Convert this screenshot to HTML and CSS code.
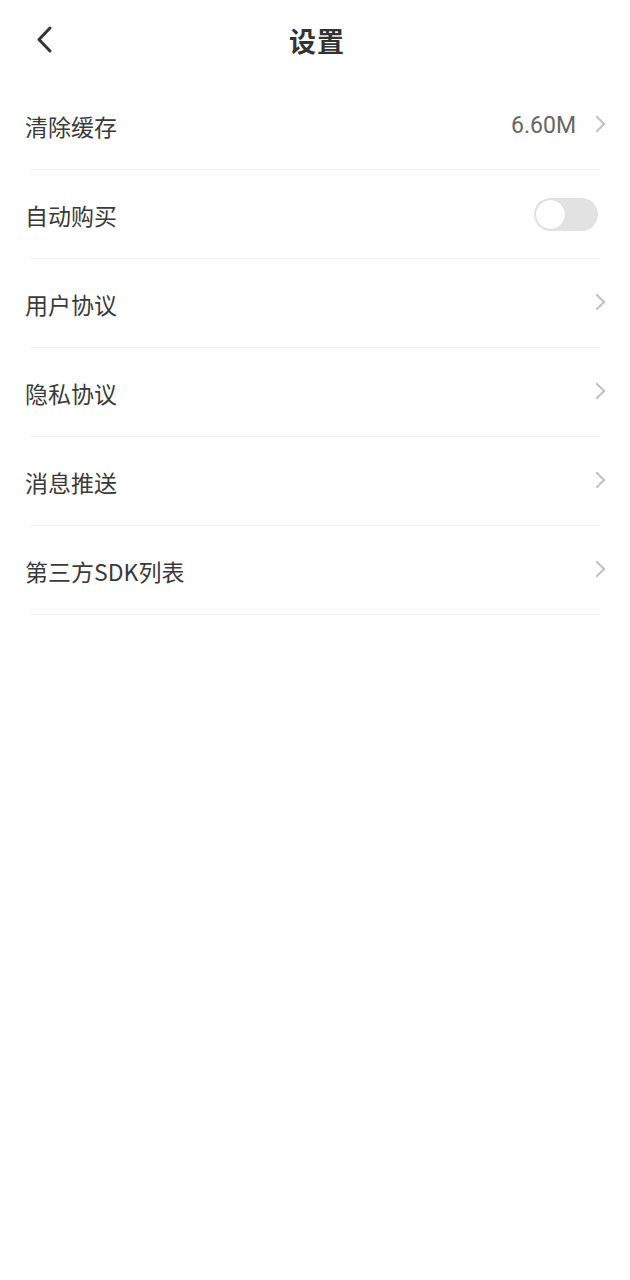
FILE: index.html
```html
<!DOCTYPE html>
<html lang="zh-CN">
<head>
    <meta charset="UTF-8">
    <meta name="viewport" content="width=device-width, initial-scale=1.0">
    <title>设置</title>
    <link rel="stylesheet" href="styles.css">
</head>
<body>
    <div class="nav-bar">
        <button class="back-btn">
            <svg width="20" height="30" viewBox="0 0 20 30">
                <polyline points="15,3 4,14.5 15,26" fill="none" stroke="#333" stroke-width="3" stroke-linecap="round" stroke-linejoin="round"/>
            </svg>
        </button>
        <div class="nav-title">设置</div>
    </div>

    <div class="setting-list">
        <div class="setting-row">
            <span class="row-label">清除缓存</span>
            <div class="row-right">
                <span class="row-value">6.60M</span>
                <span class="chevron"></span>
            </div>
        </div>
        <div class="setting-row">
            <span class="row-label">自动购买</span>
            <div class="row-right">
                <div class="switch"><div class="knob"></div></div>
            </div>
        </div>
        <div class="setting-row">
            <span class="row-label">用户协议</span>
            <div class="row-right"><span class="chevron"></span></div>
        </div>
        <div class="setting-row">
            <span class="row-label">隐私协议</span>
            <div class="row-right"><span class="chevron"></span></div>
        </div>
        <div class="setting-row">
            <span class="row-label">消息推送</span>
            <div class="row-right"><span class="chevron"></span></div>
        </div>
        <div class="setting-row">
            <span class="row-label">第三方SDK列表</span>
            <div class="row-right"><span class="chevron"></span></div>
        </div>
    </div>
</body>
</html>
```

FILE: styles.css
```css
body {
    margin: 0;
    padding: 0;
    background-color: #fff;
    color: #333;
    font-family: "Noto Sans CJK SC", "Noto Sans", sans-serif;
}

.nav-bar {
    position: relative;
    height: 81px;
    display: flex;
    align-items: center;
    justify-content: center;
}

.back-btn {
    position: absolute;
    left: 35px;
    top: 25px;
    background: none;
    border: none;
    padding: 0;
    width: 20px;
    height: 30px;
}

.nav-title {
    font-size: 27px;
    font-weight: bold;
    color: #333;
    letter-spacing: 1px;
    margin-left: 4px;
}

.setting-list {
    display: flex;
    flex-direction: column;
}

.setting-row {
    height: 89px;
    display: flex;
    align-items: center;
    justify-content: space-between;
    padding: 0 24px 0 25px;
    box-sizing: border-box;
    position: relative;
}

/* divider slightly inset from the edges */
.setting-row::after {
    content: '';
    position: absolute;
    left: 30px;
    right: 30px;
    bottom: 0;
    height: 1px;
    background-color: #f0f0f0;
}

.row-label {
    font-size: 23px;
    color: #3a3a3a;
}

.row-right {
    display: flex;
    align-items: center;
    gap: 15px;
}

.row-value {
    font-family: Roboto, "Noto Sans", sans-serif;
    font-size: 23px;
    color: #666;
}

.chevron {
    width: 10px;
    height: 10px;
    border-top: 2px solid #c2c2c2;
    border-right: 2px solid #c2c2c2;
    transform: rotate(45deg);
    margin-right: 3px;
    margin-top: -4px;
}

.switch {
    width: 64px;
    height: 33px;
    border-radius: 17px;
    background-color: #e2e2e2;
    display: flex;
    align-items: center;
    padding: 2px;
    box-sizing: border-box;
    margin-right: 8px;
}

.knob {
    width: 29px;
    height: 29px;
    border-radius: 50%;
    background-color: #fff;
    box-shadow: 0 0 1px rgba(0, 0, 0, 0.15);
}
```
